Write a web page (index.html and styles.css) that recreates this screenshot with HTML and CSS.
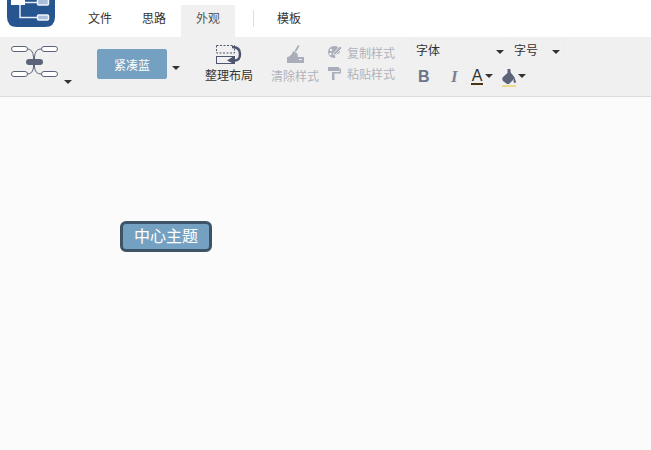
FILE: index.html
```html
<!DOCTYPE html>
<html lang="zh-CN">
<head>
    <meta charset="UTF-8">
    <title>思维导图</title>
    <link rel="stylesheet" href="styles.css">
</head>
<body>
    <!-- Top menu with logo and tabs -->
    <div class="menu-bar">
        <svg class="logo" width="48" height="27" viewBox="0 0 48 27">
            <path d="M0 0H48V17Q48 27 38 27H10Q0 27 0 17Z" fill="#27558f"/>
            <path d="M13 4V17.500H30M18 2.500H30" stroke="#e6edf5" stroke-width="1.500" fill="none"/>
            <rect x="4" y="0" width="14" height="5" fill="#fff"/>
            <rect x="30.500" y="-1" width="11" height="6" rx="1" fill="#a9bfd9" stroke="#f0f4f9" stroke-width="1.500"/>
            <rect x="30.500" y="15" width="11" height="5" rx="1" fill="#a9bfd9" stroke="#f0f4f9" stroke-width="1.500"/>
        </svg>
        <div class="tabs">
            <span class="tab">文件</span>
            <span class="tab">思路</span>
            <span class="tab active">外观</span>
            <span class="tab-divider"></span>
            <span class="tab">模板</span>
        </div>
    </div>

    <!-- Toolbar -->
    <div class="toolbar">
        <div class="group structure">
            <svg width="48" height="36" viewBox="0 0 48 36">
                <g fill="none" stroke="#5b6378">
                    <path d="M17 5Q23 5 23.500 13V23Q23 30 17 30"/>
                    <path d="M31 5Q25 5 24.500 13V23Q25 30 31 30"/>
                    <rect x="1.500" y="2.500" width="16" height="5" rx="2.500" fill="#fff"/>
                    <rect x="31.500" y="2.500" width="16" height="5" rx="2.500" fill="#fff"/>
                    <rect x="1.500" y="27.500" width="16" height="5" rx="2.500" fill="#fff"/>
                    <rect x="31.500" y="27.500" width="16" height="5" rx="2.500" fill="#fff"/>
                </g>
                <rect x="16" y="15" width="17" height="6" rx="3" fill="#5b6378"/>
            </svg>
            <span class="caret structure-caret"></span>
        </div>

        <div class="group theme">
            <button class="theme-btn">紧凑蓝</button>
            <span class="caret"></span>
        </div>

        <div class="group arrange">
            <svg width="26" height="19" viewBox="0 0 26 19">
                <rect x="0.500" y="0.500" width="18" height="7.500" fill="none" stroke="#4d566e" stroke-dasharray="2 1.500"/>
                <rect x="0.500" y="11.500" width="18" height="7" fill="none" stroke="#4d566e"/>
                <path d="M16 2Q24 2 24 9T18 15.500" fill="none" stroke="#4d566e" stroke-width="2.500"/>
                <path d="M11 15.500L18 11V19Z" fill="#4d566e"/>
            </svg>
            <span class="arrange-label">整理布局</span>
        </div>

        <div class="group clear">
            <svg width="17" height="19" viewBox="0 0 17 19">
                <path d="M11 0L12.500 1L9 7L7.500 6Z" fill="#a9aeba"/>
                <path d="M6 6L10.500 8.500L11 12H1Q5 10 6 6Z" fill="#a9aeba"/>
                <path d="M0 12H17V18H0Z" fill="#a9aeba"/>
                <path d="M12 14H15V15H12Z" fill="#f0f0f0"/>
            </svg>
            <span class="muted">清除样式</span>
        </div>

        <div class="group styles">
            <div class="style-row">
                <svg width="15" height="14" viewBox="0 0 15 14">
                    <path d="M7 1A6 6 0 1 0 7 13Q9 13 8 11Q8 9 10 9Q13 9 13 6Q12 1 7 1Z" fill="#a9aeba"/>
                    <path d="M6 9L13 1L15 3L8 10Z" fill="#a9aeba" stroke="#f0f0f0" stroke-width="0.800"/>
                    <circle cx="4" cy="5" r="1.200" fill="#f0f0f0"/>
                    <circle cx="3.500" cy="9" r="1.200" fill="#f0f0f0"/>
                </svg>
                <span class="muted">复制样式</span>
            </div>
            <div class="style-row">
                <svg width="15" height="14" viewBox="0 0 15 14">
                    <path d="M1 1H12V5H1Z" fill="#a9aeba"/>
                    <path d="M12 2.500H14V7.500H7.500V14H5V6H12.500V5" fill="#a9aeba"/>
                </svg>
                <span class="muted">粘贴样式</span>
            </div>
        </div>

        <div class="group font">
            <div class="font-row selects">
                <div class="select font-family">字体<span class="caret"></span></div>
                <div class="select font-size">字号<span class="caret"></span></div>
            </div>
            <div class="font-row format">
                <span class="bold">B</span>
                <span class="italic">I</span>
                <span class="color-btn">
                    <span class="text-a">A</span>
                    <span class="caret"></span>
                </span>
                <span class="color-btn fill">
                    <svg width="14" height="16" viewBox="0 0 14 16">
                        <path d="M5.500 0H8.500V3Q9 4.500 10 5L13 9L7 15H5L1 12Q-0.500 10 1 8L5.500 4Z" fill="#5b6378"/>
                        <path d="M12.500 9Q14.500 12 13.500 14Q11.500 14.500 11.500 12Z" fill="#5b6378"/>
                    </svg>
                    <span class="caret"></span>
                </span>
            </div>
        </div>
    </div>

    <!-- Canvas -->
    <div class="canvas">
        <div class="root-topic">中心主题</div>
    </div>
</body>
</html>
```

FILE: styles.css
```css
html, body {
    height: 100%;
}
body {
    margin: 0;
    display: flex;
    flex-direction: column;
    font-family: "Liberation Sans", "Noto Sans CJK SC", sans-serif;
    font-size: 12px;
    color: #333;
    background-color: #fbfbfb;
    overflow: hidden;
}
.menu-bar {
    display: flex;
    height: 37px;
    background-color: #fff;
}
.logo {
    margin-left: 7px;
}
.tabs {
    display: flex;
    margin-left: 18px;
    margin-top: 5px;
}
.tab {
    width: 54px;
    line-height: 28px;
    text-align: center;
}
.tab.active {
    background-color: #f0f0f0;
    color: #555;
    height: 32px;
}
.tab-divider {
    width: 1px;
    height: 17px;
    margin: 5px 0 0 18px;
    background-color: #ddd;
}
.tab-divider + .tab {
    margin-left: 8px;
}
.toolbar {
    display: flex;
    height: 59px;
    background-color: #f0f0f0;
    border-bottom: 1px solid #ddd;
}
.group {
    position: relative;
}
.caret {
    display: inline-block;
    width: 0;
    height: 0;
    border-left: 4px solid transparent;
    border-right: 4px solid transparent;
    border-top: 4px solid #333;
}
.structure {
    display: flex;
    width: 73px;
    padding: 7px 0 0 10px;
    box-sizing: border-box;
}
.structure-caret {
    margin: 36px 0 0 6px;
}
.theme {
    display: flex;
    align-items: flex-start;
    width: 125px;
    margin-left: 24px;
    padding-top: 12px;
    box-sizing: border-box;
}
.theme-btn {
    width: 70px;
    height: 30px;
    padding: 0;
    border: none;
    border-radius: 2px;
    background-color: #74a1c1;
    color: #fff;
    font: inherit;
}
.theme .caret {
    margin: 17px 0 0 5px;
}
.arrange {
    display: flex;
    flex-direction: column;
    align-items: center;
    width: 52px;
    margin-left: -19px;
    padding-top: 8px;
}
.arrange-label {
    margin-top: 2px;
    color: #333;
}
.clear {
    display: flex;
    flex-direction: column;
    align-items: center;
    width: 50px;
    margin-left: 15px;
    padding-top: 8px;
}
.clear span {
    margin-top: 3px;
}
.muted {
    color: #b0b3bb;
}
.styles {
    width: 84px;
    margin-left: 7px;
    padding-top: 5px;
}
.style-row {
    display: flex;
    align-items: center;
    gap: 5px;
    height: 20px;
}
.style-row + .style-row {
    margin-top: 1px;
}
.font {
    margin-left: 1px;
    padding-top: 2px;
}
.font-row {
    display: flex;
}
.selects {
    gap: 2px;
}
.select {
    display: flex;
    justify-content: space-between;
    align-items: center;
    height: 23px;
    padding: 0 3px 2px;
    box-sizing: border-box;
    border: 1px solid #eeeeee;
}
.select .caret {
    margin-top: 5px;
}
.font-family {
    width: 96px;
}
.font-size {
    width: 54px;
}
.format {
    align-items: center;
    margin-top: 4px;
    height: 22px;
}
.bold {
    width: 33px;
    margin-left: 6px;
    font-size: 16px;
    font-weight: bold;
    color: #6c7489;
}
.italic {
    width: 15px;
    font-family: "Liberation Serif", serif;
    font-size: 17px;
    font-style: italic;
    font-weight: bold;
    color: #7d8292;
}
.color-btn {
    display: flex;
    align-items: flex-end;
    gap: 2px;
    width: 29px;
    height: 22px;
    padding: 0 0 2px 4px;
    box-sizing: border-box;
    border: 1px solid #eeeeee;
}
.color-btn .caret {
    align-self: center;
    margin-bottom: 1px;
}
.color-btn.fill {
    margin-left: 4px;
    padding-left: 2px;
}
.text-a {
    width: 12px;
    font-size: 16px;
    line-height: 15px;
    text-align: center;
    border-bottom: 2px solid #4a3510;
}
.fill svg {
    box-shadow: 0 2px 0 #ead98e;
}
.canvas {
    flex: 1;
    position: relative;
    background-color: #fbfbfb;
}
.root-topic {
    position: absolute;
    left: 120px;
    top: 124px;
    width: 92px;
    height: 31px;
    box-sizing: border-box;
    border: 3px solid #3d5368;
    border-radius: 6px;
    background-color: #74a1c1;
    color: #fff;
    font-size: 16px;
    line-height: 26px;
    text-align: center;
}
```
